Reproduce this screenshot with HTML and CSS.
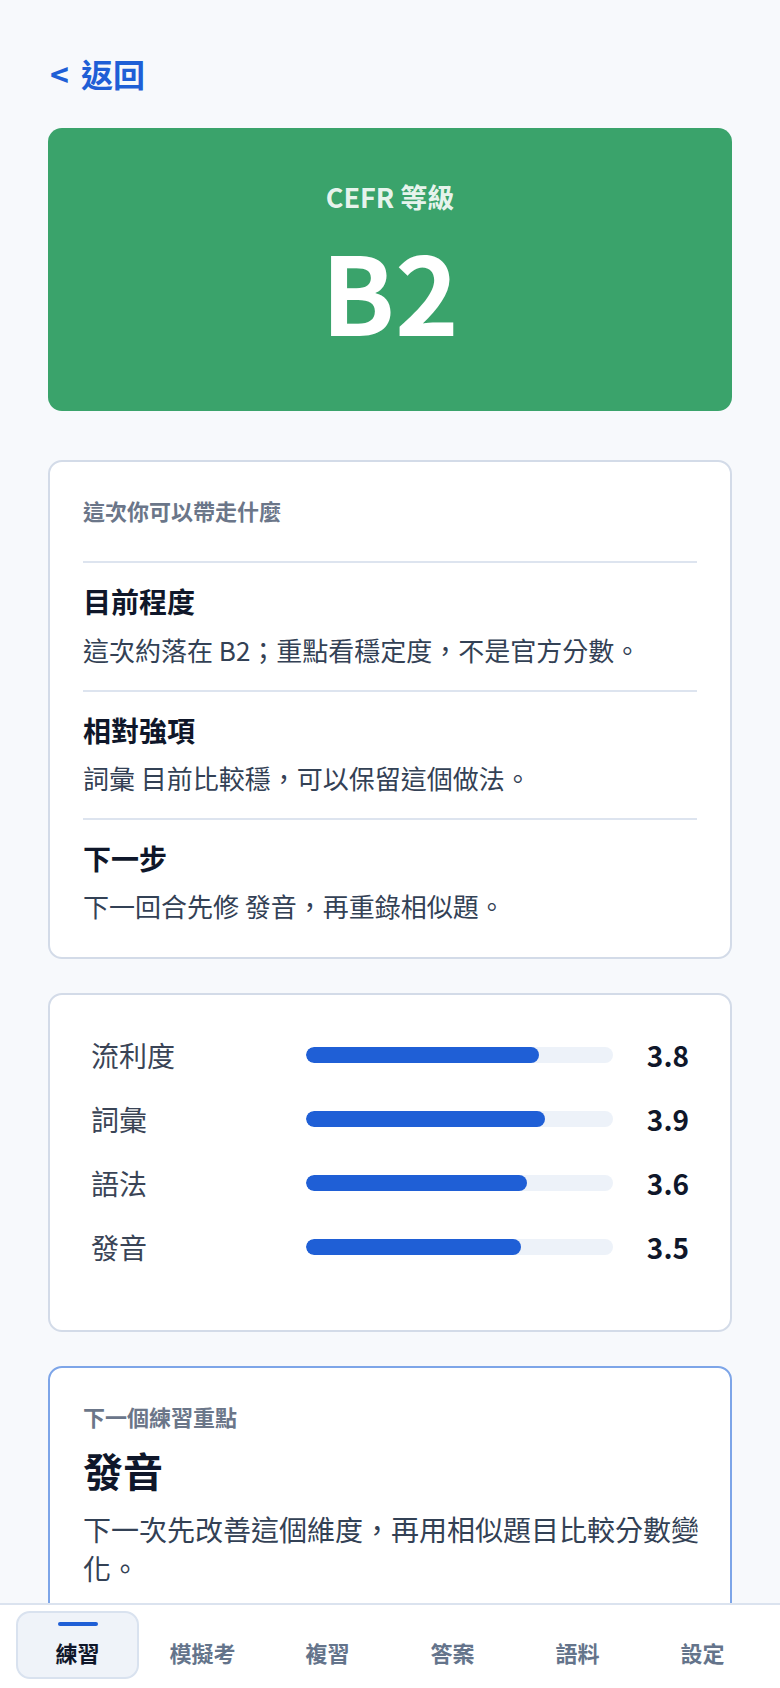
FILE: index.html
```html
<!DOCTYPE html>
<html lang="zh-Hant">
<head>
    <meta charset="UTF-8">
    <meta name="viewport" content="width=device-width, initial-scale=1.0">
    <title>口說結果</title>
    <link rel="stylesheet" href="styles.css">
</head>
<body>
    <main class="page">
        <a class="back-link" href="#"><span class="back-chevron">&lt;</span>返回</a>

        <section class="level-card">
            <p class="level-label">CEFR 等級</p>
            <p class="level-value">B2</p>
        </section>

        <section class="card summary">
            <p class="card-label">這次你可以帶走什麼</p>
            <div class="summary-item">
                <h3>目前程度</h3>
                <p>這次約落在 B2；重點看穩定度，不是官方分數。</p>
            </div>
            <div class="summary-item">
                <h3>相對強項</h3>
                <p>詞彙 目前比較穩，可以保留這個做法。</p>
            </div>
            <div class="summary-item">
                <h3>下一步</h3>
                <p>下一回合先修 發音，再重錄相似題。</p>
            </div>
        </section>

        <section class="card scores">
            <div class="score-row">
                <span class="score-name">流利度</span>
                <div class="score-track"><div class="score-fill" style="width: 76%"></div></div>
                <span class="score-value">3.8</span>
            </div>
            <div class="score-row">
                <span class="score-name">詞彙</span>
                <div class="score-track"><div class="score-fill" style="width: 78%"></div></div>
                <span class="score-value">3.9</span>
            </div>
            <div class="score-row">
                <span class="score-name">語法</span>
                <div class="score-track"><div class="score-fill" style="width: 72%"></div></div>
                <span class="score-value">3.6</span>
            </div>
            <div class="score-row">
                <span class="score-name">發音</span>
                <div class="score-track"><div class="score-fill" style="width: 70%"></div></div>
                <span class="score-value">3.5</span>
            </div>
        </section>

        <section class="card focus">
            <p class="card-label">下一個練習重點</p>
            <h2 class="focus-title">發音</h2>
            <p class="focus-text">下一次先改善這個維度，再用相似題目比較分數變化。</p>
        </section>
    </main>

    <nav class="tab-bar">
        <a class="tab active" href="#"><span class="tab-mark"></span><span class="tab-text">練習</span></a>
        <a class="tab" href="#"><span class="tab-mark"></span><span class="tab-text">模擬考</span></a>
        <a class="tab" href="#"><span class="tab-mark"></span><span class="tab-text">複習</span></a>
        <a class="tab" href="#"><span class="tab-mark"></span><span class="tab-text">答案</span></a>
        <a class="tab" href="#"><span class="tab-mark"></span><span class="tab-text">語料</span></a>
        <a class="tab" href="#"><span class="tab-mark"></span><span class="tab-text">設定</span></a>
    </nav>
</body>
</html>
```

FILE: styles.css
```css
* {
    box-sizing: border-box;
}
body {
    margin: 0;
    font-family: "Noto Sans CJK TC", "Noto Sans", sans-serif;
    background-color: #f7f9fc;
    color: #0f172a;
}
p,
h2,
h3 {
    margin: 0;
}
.page {
    padding: 51px 48px 120px;
}
.back-link {
    display: inline-flex;
    align-items: center;
    gap: 12px;
    margin-left: 2px;
    font-size: 32px;
    line-height: 1.4;
    font-weight: 700;
    color: #1f5fd6;
    text-decoration: none;
    margin-bottom: 32px;
}

/* green level banner */
.level-card {
    background-color: #3aa36b;
    border-radius: 14px;
    padding: 50px 24px 68px;
    text-align: center;
    color: #fff;
    margin-bottom: 49px;
}
.level-label {
    font-size: 27px;
    line-height: 1.4;
    font-weight: 700;
    color: rgba(255, 255, 255, 0.9);
    margin-bottom: 19px;
}
.level-value {
    font-size: 108px;
    line-height: 1;
    font-weight: 700;
}

/* shared card */
.card {
    background-color: #fff;
    border: 2px solid #d3dbe8;
    border-radius: 14px;
    margin-bottom: 34px;
}
.card-label {
    font-size: 22px;
    line-height: 1.4;
    font-weight: 700;
    color: #6b7689;
}

.summary {
    padding: 33px 33px 11px;
}
.summary .card-label {
    margin-bottom: 36px;
}
.summary-item {
    border-top: 2px solid #dde4ef;
    padding: 19px 0 21px;
}
.summary-item h3 {
    font-size: 28px;
    line-height: 1.4;
    font-weight: 700;
    color: #0f172a;
    margin-bottom: 8px;
}
.summary-item p {
    font-size: 26px;
    line-height: 1.5;
    color: #334155;
}

/* score bars */
.scores {
    display: flex;
    flex-direction: column;
    gap: 16px;
    padding: 36px 41px 59px;
}
.score-row {
    display: grid;
    grid-template-columns: 215px 307px 1fr;
    align-items: center;
    height: 48px;
}
.score-name {
    font-size: 28px;
    color: #3a4456;
}
.score-track {
    height: 16px;
    border-radius: 8px;
    background-color: #edf2f9;
    overflow: hidden;
}
.score-fill {
    height: 100%;
    border-radius: 8px;
    background-color: #1f5fd6;
}
.score-value {
    text-align: right;
    font-size: 28px;
    font-weight: 700;
    color: #0f172a;
}

/* next focus */
.focus {
    border-color: #7da5e8;
    padding: 33px 30px 33px 33px;
}
.focus .card-label {
    margin-bottom: 12px;
}
.focus-title {
    font-size: 40px;
    line-height: 1.3;
    font-weight: 700;
    margin-bottom: 14px;
}
.focus-text {
    font-size: 28px;
    line-height: 1.4;
    color: #334155;
}

/* bottom navigation */
.tab-bar {
    position: fixed;
    left: 0;
    right: 0;
    bottom: 0;
    display: grid;
    grid-template-columns: repeat(6, 1fr);
    gap: 2px;
    padding: 6px 16px 9px;
    background-color: #fff;
    border-top: 2px solid #dbe3ef;
}
.tab {
    display: flex;
    flex-direction: column;
    align-items: center;
    height: 68px;
    padding-top: 9px;
    border: 2px solid transparent;
    border-radius: 14px;
    text-decoration: none;
    color: #64748b;
}
.tab-mark {
    width: 40px;
    height: 4px;
    border-radius: 2px;
    margin-bottom: 11px;
}
.tab-text {
    font-size: 22px;
    line-height: 1.4;
    font-weight: 700;
}
.tab.active {
    background-color: #eff3f9;
    border-color: #d9e2ef;
    color: #0f172a;
}
.tab.active .tab-mark {
    background-color: #1f5fd6;
}
```
